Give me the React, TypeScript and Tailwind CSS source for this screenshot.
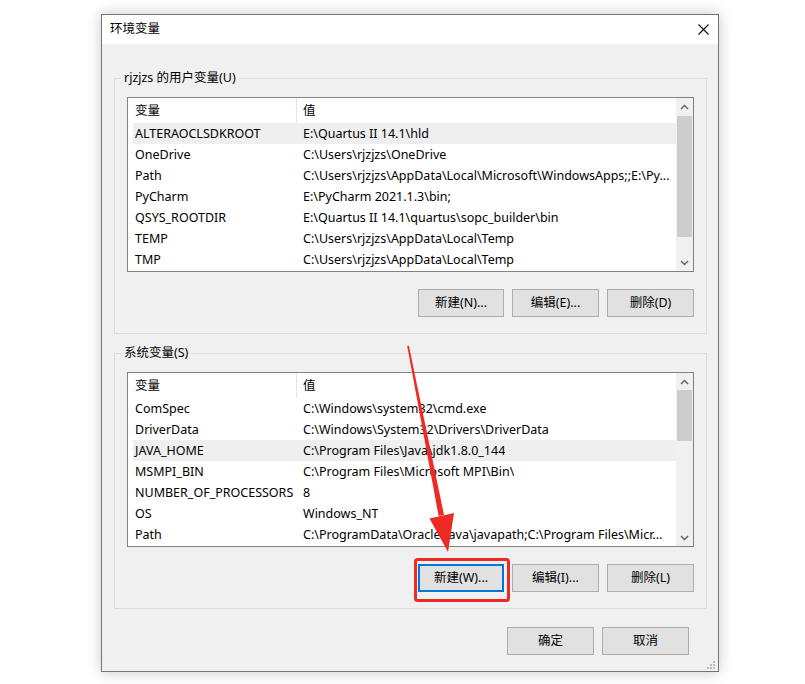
import React from "react";

type Row = { name: string; value: string; selected?: boolean };

const userVars: Row[] = [
  { name: "ALTERAOCLSDKROOT", value: "E:\\Quartus II 14.1\\hld", selected: true },
  { name: "OneDrive", value: "C:\\Users\\rjzjzs\\OneDrive" },
  { name: "Path", value: "C:\\Users\\rjzjzs\\AppData\\Local\\Microsoft\\WindowsApps;;E:\\Py..." },
  { name: "PyCharm", value: "E:\\PyCharm 2021.1.3\\bin;" },
  { name: "QSYS_ROOTDIR", value: "E:\\Quartus II 14.1\\quartus\\sopc_builder\\bin" },
  { name: "TEMP", value: "C:\\Users\\rjzjzs\\AppData\\Local\\Temp" },
  { name: "TMP", value: "C:\\Users\\rjzjzs\\AppData\\Local\\Temp" },
];

const sysVars: Row[] = [
  { name: "ComSpec", value: "C:\\Windows\\system32\\cmd.exe" },
  { name: "DriverData", value: "C:\\Windows\\System32\\Drivers\\DriverData" },
  { name: "JAVA_HOME", value: "C:\\Program Files\\Java\\jdk1.8.0_144", selected: true },
  { name: "MSMPI_BIN", value: "C:\\Program Files\\Microsoft MPI\\Bin\\" },
  { name: "NUMBER_OF_PROCESSORS", value: "8" },
  { name: "OS", value: "Windows_NT" },
  { name: "Path", value: "C:\\ProgramData\\Oracle\\Java\\javapath;C:\\Program Files\\Micr..." },
];

function Chevron({ up }: { up?: boolean }) {
  return (
    <svg width="9" height="6" viewBox="0 0 9 6" className="block">
      <polyline
        points={up ? "1,5 4.5,1.5 8,5" : "1,1 4.5,4.5 8,1"}
        fill="none"
        stroke="#606060"
        strokeWidth="1.4"
      />
    </svg>
  );
}

function ScrollBar({ thumbTop, thumbHeight }: { thumbTop: number; thumbHeight: number }) {
  return (
    <div className="w-[17px] h-full bg-[#f0f0f0] flex flex-col">
      <div className="h-[17px] flex items-center justify-center">
        <Chevron up />
      </div>
      <div className="flex-1 relative">
        <div
          className="absolute left-[1px] right-[1px] bg-[#cdcdcd]"
          style={{ top: thumbTop, height: thumbHeight }}
        />
      </div>
      <div className="h-[17px] flex items-center justify-center">
        <Chevron />
      </div>
    </div>
  );
}

function VarList({ rows, thumbTop, thumbHeight }: { rows: Row[]; thumbTop: number; thumbHeight: number }) {
  return (
    <div className="h-[175px] border border-[#828282] bg-white flex overflow-hidden">
      <div className="flex-1 min-w-0">
        <div className="h-[25px] flex items-stretch">
          <div className="w-[168px] pl-[7px] pt-[1px] flex items-center">变量</div>
          <div className="w-px bg-[#e5e5e5]" />
          <div className="pl-[6px] pt-[1px] flex items-center">值</div>
        </div>
        {rows.map((r) => (
          <div
            key={r.name}
            className={`h-[21px] ml-[5px] pt-[1px] flex items-center whitespace-nowrap ${r.selected ? "bg-[#efefef]" : ""}`}
          >
            <div className="w-[163px] pl-[2px] shrink-0">{r.name}</div>
            <div className="pl-[7px] overflow-hidden">{r.value}</div>
          </div>
        ))}
      </div>
      <ScrollBar thumbTop={thumbTop} thumbHeight={thumbHeight} />
    </div>
  );
}

function Btn({ label, w, focused }: { label: string; w: string; focused?: boolean }) {
  return (
    <button
      className={`${w} h-[28px] bg-[#e1e1e1] flex items-center justify-center ${
        focused ? "border-2 border-[#0078d7]" : "border border-[#adadad]"
      }`}
    >
      {label}
    </button>
  );
}

function Group({ title, children, className }: { title: string; children: React.ReactNode; className?: string }) {
  return (
    <fieldset className={`border border-[#dcdcdc] px-[12px] pt-[11px] pb-[16px] ${className ?? ""}`}>
      <legend className="-ml-[6px] px-[3px] leading-[16px]">{title}</legend>
      {children}
    </fieldset>
  );
}

export default function App() {
  return (
    <div
      className="relative w-[805px] h-[684px] bg-white overflow-hidden pt-[14px] pl-[101px] text-[12.5px] text-black"
      style={{ fontFamily: '"Noto Sans", "Noto Sans CJK SC", sans-serif' }}
    >
      <div className="relative w-[618px] h-[658px] border border-[#747474] flex flex-col shadow-[0_0_14px_rgba(0,0,0,0.22)]">
        {/* title bar */}
        <div className="h-[29px] bg-white flex items-center justify-between pl-[8px] pr-[9px]">
          <span>环境变量</span>
          <svg width="11" height="11" viewBox="0 0 11 11">
            <path d="M0.5 0.5 L10.5 10.5 M10.5 0.5 L0.5 10.5" stroke="#111" strokeWidth="1.1" />
          </svg>
        </div>

        <div className="flex-1 bg-[#f0f0f0] pl-[12px] pr-[11px]">
          <Group title="rjzjzs 的用户变量(U)" className="mt-[26px]">
            <VarList rows={userVars} thumbTop={1} thumbHeight={121} />
            <div className="mt-[17px] flex justify-end gap-[8px]">
              <Btn label="新建(N)..." w="w-[86px]" />
              <Btn label="编辑(E)..." w="w-[87px]" />
              <Btn label="删除(D)" w="w-[87px]" />
            </div>
          </Group>

          <Group title="系统变量(S)" className="mt-[11px]">
            <VarList rows={sysVars} thumbTop={0} thumbHeight={51} />
            <div className="mt-[17px] flex justify-end gap-[8px]">
              <Btn label="新建(W)..." w="w-[86px]" focused />
              <Btn label="编辑(I)..." w="w-[87px]" />
              <Btn label="删除(L)" w="w-[87px]" />
            </div>
          </Group>

          <div className="mt-[18px] pr-[18px] flex justify-end gap-[8px]">
            <Btn label="确定" w="w-[87px]" />
            <Btn label="取消" w="w-[87px]" />
          </div>
        </div>

        {/* resize grip */}
        <svg width="9" height="9" viewBox="0 0 9 9" className="absolute right-[2px] bottom-[1px]">
          <rect x="6" y="0" width="2" height="2" fill="#bcbcbc" />
          <rect x="3" y="3" width="2" height="2" fill="#bcbcbc" />
          <rect x="6" y="3" width="2" height="2" fill="#bcbcbc" />
          <rect x="0" y="6" width="2" height="2" fill="#bcbcbc" />
          <rect x="3" y="6" width="2" height="2" fill="#bcbcbc" />
          <rect x="6" y="6" width="2" height="2" fill="#bcbcbc" />
        </svg>
      </div>

      {/* red annotation */}
      <svg width="805" height="684" className="absolute inset-0 pointer-events-none">
        <rect x="415.5" y="559.5" width="93" height="41" rx="2" fill="none" stroke="#ee2a24" strokeWidth="3" />
        <polygon points="407.2,346 408.9,345.7 444,515 438.6,516" fill="#ee2a24" />
        <polygon points="429.5,518.5 454,513 448,552" fill="#ee2a24" />
      </svg>
    </div>
  );
}
